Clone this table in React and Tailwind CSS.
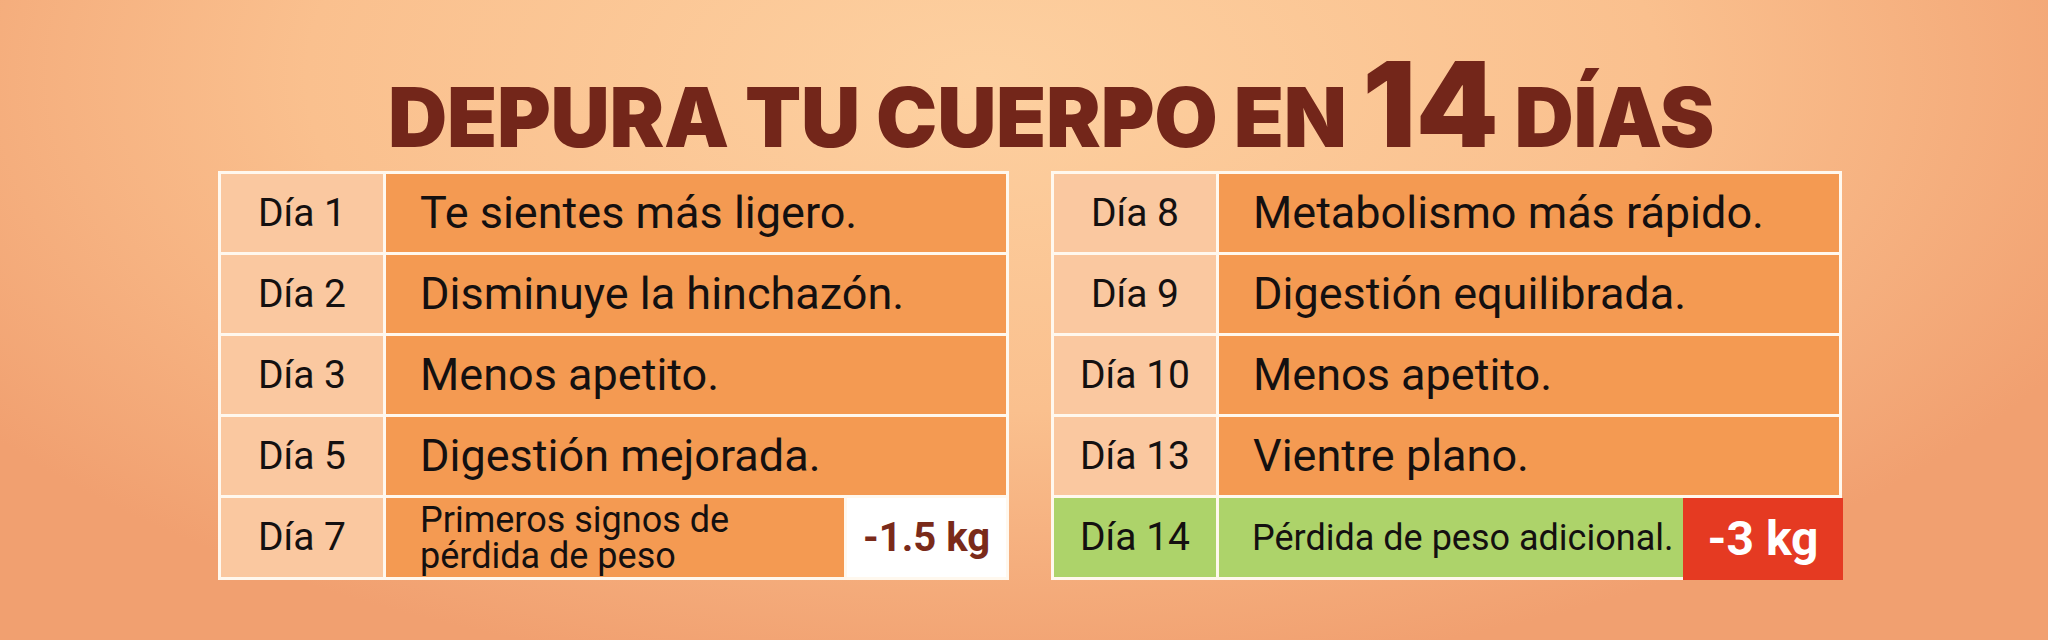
export default function App() {
  const left = [
    ["Día 1", "Te sientes más ligero."],
    ["Día 2", "Disminuye la hinchazón."],
    ["Día 3", "Menos apetito."],
    ["Día 5", "Digestión mejorada."],
  ];
  const right = [
    ["Día 8", "Metabolismo más rápido."],
    ["Día 9", "Digestión equilibrada."],
    ["Día 10", "Menos apetito."],
    ["Día 13", "Vientre plano."],
  ];

  const Row = ({ label, text }) => (
    <div className="flex h-[78px] gap-[3px]">
      <div className="w-[162px] shrink-0 bg-[#fac8a0] flex items-center justify-center text-[39px] text-[#141010]">
        {label}
      </div>
      <div className="flex-1 bg-[#f49a52] flex items-center pl-[34px] text-[45px] text-[#141010]">
        {text}
      </div>
    </div>
  );

  return (
    <div className="w-[2048px] h-[640px] overflow-hidden bg-[radial-gradient(ellipse_60%_95%_at_48%_12%,#fdd0a0_0%,#fac08e_55%,#f1a070_100%)] font-['Roboto',sans-serif]">
      <h1 className="pt-[45px] pl-[54px] text-center leading-none text-[82px] font-black text-[#73261a] font-['Inter',sans-serif] tracking-[-0.003em]">
        DEPURA TU CUERPO EN <span className="text-[118px]">14</span> DÍAS
      </h1>
      <div className="flex gap-[42px] pl-[218px] mt-[8px]">
        <div className="w-[791px] bg-[#fff8ee] p-[3px] flex flex-col gap-[3px]">
          {left.map(([l, t]) => (
            <Row key={l} label={l} text={t} />
          ))}
          <div className="flex h-[79px] gap-[3px]">
            <div className="w-[162px] shrink-0 bg-[#fac8a0] flex items-center justify-center text-[39px] text-[#141010]">
              Día 7
            </div>
            <div className="flex-1 bg-[#f49a52] flex flex-col justify-center pl-[34px] text-[36px] leading-[36px] text-[#141010]">
              <span>Primeros signos de</span>
              <span>pérdida de peso</span>
            </div>
            <div className="w-[159px] shrink-0 bg-white flex items-center justify-center text-[40px] font-bold text-[#7a2a1a]">
              -1.5 kg
            </div>
          </div>
        </div>
        <div className="w-[791px] bg-[#fff8ee] p-[3px] flex flex-col gap-[3px]">
          {right.map(([l, t]) => (
            <Row key={l} label={l} text={t} />
          ))}
          <div className="flex h-[79px] gap-[3px]">
            <div className="w-[162px] shrink-0 bg-[#add36a] flex items-center justify-center text-[39px] text-[#141010]">
              Día 14
            </div>
            <div className="flex-1 flex">
              <div className="flex-1 bg-[#add36a] flex items-center pl-[33px] text-[36px] text-[#141010]">
                Pérdida de peso adicional.
              </div>
              <div className="w-[160px] shrink-0 -mr-[4px] -mb-[3px] bg-[#e53a22] flex items-center justify-center text-[48px] font-bold text-white">
                -3 kg
              </div>
            </div>
          </div>
        </div>
      </div>
    </div>
  );
}
